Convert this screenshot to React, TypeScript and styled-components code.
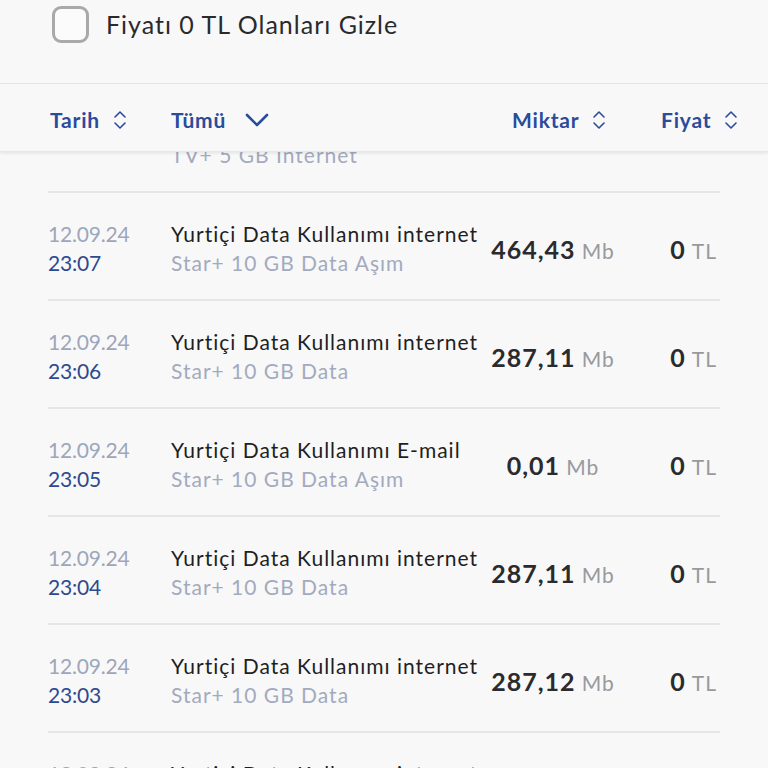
import styled, { createGlobalStyle } from 'styled-components';

const GlobalStyle = createGlobalStyle`
  html, body {
    margin: 0;
    padding: 0;
    background: #f8f8f9;
  }
  body {
    font-family: "Lato", "Noto Sans", sans-serif;
    -webkit-font-smoothing: antialiased;
  }
`;

interface Usage {
  id: number;
  date: string;
  time: string;
  title: string;
  plan: string;
  amount: string;
  unit: string;
  price: string;
}

const usages: Usage[] = [
  { id: 1, date: '', time: '', title: 'Yurtiçi Data Kullanımı internet', plan: 'TV+ 5 GB Internet', amount: '18', unit: 'Mb', price: '0' },
  { id: 2, date: '12.09.24', time: '23:07', title: 'Yurtiçi Data Kullanımı internet', plan: 'Star+ 10 GB Data Aşım', amount: '464,43', unit: 'Mb', price: '0' },
  { id: 3, date: '12.09.24', time: '23:06', title: 'Yurtiçi Data Kullanımı internet', plan: 'Star+ 10 GB Data', amount: '287,11', unit: 'Mb', price: '0' },
  { id: 4, date: '12.09.24', time: '23:05', title: 'Yurtiçi Data Kullanımı E-mail', plan: 'Star+ 10 GB Data Aşım', amount: '0,01', unit: 'Mb', price: '0' },
  { id: 5, date: '12.09.24', time: '23:04', title: 'Yurtiçi Data Kullanımı internet', plan: 'Star+ 10 GB Data', amount: '287,11', unit: 'Mb', price: '0' },
  { id: 6, date: '12.09.24', time: '23:03', title: 'Yurtiçi Data Kullanımı internet', plan: 'Star+ 10 GB Data', amount: '287,12', unit: 'Mb', price: '0' },
  { id: 7, date: '12.09.24', time: '23:02', title: 'Yurtiçi Data Kullanımı internet', plan: 'Star+ 10 GB Data', amount: '287,10', unit: 'Mb', price: '0' },
];

function SortIcon() {
  return (
    <svg width="16" height="22" viewBox="0 0 16 22" fill="none">
      <path d="M3 8 L8 3 L13 8" stroke="#2b4b9b" strokeWidth="1.6" strokeLinecap="round" strokeLinejoin="round" />
      <path d="M3 14 L8 19 L13 14" stroke="#2b4b9b" strokeWidth="1.6" strokeLinecap="round" strokeLinejoin="round" />
    </svg>
  );
}

function ChevronDown() {
  return (
    <svg width="24" height="14" viewBox="0 0 24 14" fill="none">
      <path d="M2 2 L12 12 L22 2" stroke="#2b4b9b" strokeWidth="2.6" strokeLinecap="round" strokeLinejoin="round" />
    </svg>
  );
}

export default function App() {
  return (
    <>
      <GlobalStyle />
      <Screen>
        <FilterBar>
          <Checkbox type="button" aria-label="Fiyatı 0 TL Olanları Gizle" />
          <FilterLabel>Fiyatı 0 TL Olanları Gizle</FilterLabel>
        </FilterBar>

        <TableHeader>
          <HeaderCell $gap={12}>
            Tarih <SortIcon />
          </HeaderCell>
          <HeaderCell $gap={19}>
            Tümü <ChevronDown />
          </HeaderCell>
          <HeaderCell $gap={12}>
            Miktar <SortIcon />
          </HeaderCell>
          <HeaderCell $gap={12}>
            Fiyat <SortIcon />
          </HeaderCell>
        </TableHeader>

        <Viewport>
          <List>
            {usages.map((u) => (
              <Row key={u.id}>
                <DateCell>
                  <DateText>{u.date}</DateText>
                  <TimeText>{u.time}</TimeText>
                </DateCell>
                <InfoCell>
                  <Title>{u.title}</Title>
                  <Plan>{u.plan}</Plan>
                </InfoCell>
                <AmountCell>
                  <Value>{u.amount}</Value>
                  <Unit>{u.unit}</Unit>
                </AmountCell>
                <PriceCell>
                  <Value>{u.price}</Value>
                  <Unit>TL</Unit>
                </PriceCell>
              </Row>
            ))}
          </List>
        </Viewport>
      </Screen>
    </>
  );
}

const Screen = styled.div`
  width: 768px;
  height: 768px;
  display: flex;
  flex-direction: column;
  overflow: hidden;
  background: #f8f8f9;
`;

const FilterBar = styled.div`
  height: 84px;
  box-sizing: border-box;
  display: flex;
  align-items: flex-start;
  gap: 17px;
  padding: 6px 0 0 52px;
  border-bottom: 1px solid #e4e4e6;
  flex-shrink: 0;
`;

const Checkbox = styled.button`
  width: 37px;
  height: 37px;
  box-sizing: border-box;
  border: 3px solid #a9a9ab;
  border-radius: 9px;
  background: #fbfbfb;
  padding: 0;
`;

const FilterLabel = styled.span`
  font-size: 25px;
  line-height: 37px;
  color: #2a2a2c;
  letter-spacing: 1px;
`;

const TableHeader = styled.div`
  height: 68px;
  box-sizing: border-box;
  display: grid;
  grid-template-columns: 121px 341px 149px auto;
  align-items: center;
  padding: 4px 0 0 50px;
  background: #f8f8f9;
  box-shadow: 0 2px 2px rgba(0, 0, 0, 0.06);
  border-bottom: 1px solid #e8e8ea;
  position: relative;
  z-index: 1;
  flex-shrink: 0;
`;

const HeaderCell = styled.div<{ $gap: number }>`
  display: flex;
  align-items: center;
  gap: ${(p) => p.$gap}px;
  font-size: 21px;
  font-weight: 700;
  letter-spacing: 0.8px;
  color: #2b4b9b;
`;

const Viewport = styled.div`
  flex: 1;
  overflow: hidden;
`;

const List = styled.div`
  margin: -67px 48px 0 48px;
`;

const Row = styled.div`
  height: 108px;
  box-sizing: border-box;
  display: grid;
  grid-template-columns: 123px 309px 146px 94px;
  align-items: center;
  border-bottom: 2px solid #e6e6e9;
`;

const DateCell = styled.div`
  display: flex;
  flex-direction: column;
  font-size: 21px;
  line-height: 29px;
  padding-top: 3px;
  letter-spacing: -0.2px;
`;

const DateText = styled.span`
  color: #9ea6ba;
  min-height: 29px;
`;

const TimeText = styled.span`
  color: #2d4a8f;
  min-height: 29px;
`;

const InfoCell = styled(DateCell)`
  white-space: nowrap;
  letter-spacing: 1px;
`;

const Title = styled.span`
  color: #1f1f21;
`;

const Plan = styled.span`
  color: #a3aabe;
`;

const AmountCell = styled.div`
  display: flex;
  justify-content: center;
  align-items: baseline;
  gap: 6px;
  padding-top: 6px;
  letter-spacing: 1px;
`;

const PriceCell = styled(AmountCell)`
  justify-content: flex-end;
  padding-right: 3px;
`;

const Value = styled.span`
  font-size: 25px;
  font-weight: 700;
  color: #2b2b2d;
`;

const Unit = styled.span`
  font-size: 21px;
  color: #999a9d;
`;
